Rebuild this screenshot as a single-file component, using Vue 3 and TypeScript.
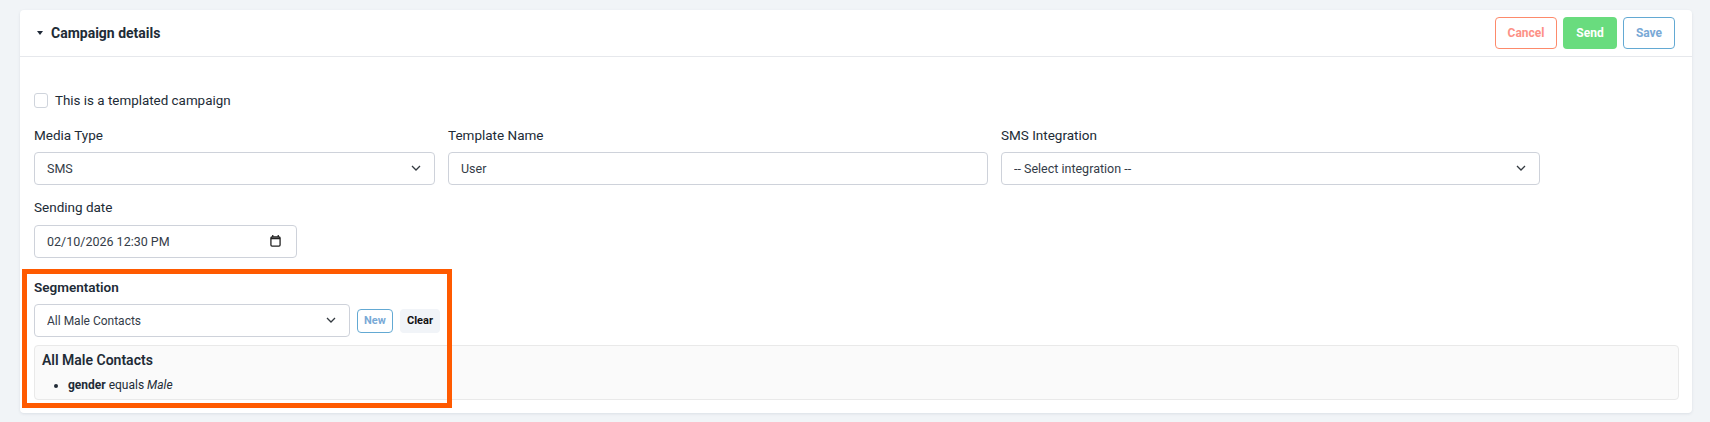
<template>
  <div class="page">
    <section class="card">
      <header class="card-head">
        <div class="title">
          <svg class="caret" width="6" height="4" viewBox="0 0 6 4"><path d="M0 0h6L3 4z" fill="#1f2937" /></svg>
          <h2>Campaign details</h2>
        </div>
        <div class="actions">
          <button class="btn cancel">Cancel</button>
          <button class="btn send">Send</button>
          <button class="btn save">Save</button>
        </div>
      </header>

      <div class="card-body">
        <label class="check">
          <input type="checkbox" />
          <span>This is a templated campaign</span>
        </label>

        <div class="fields">
          <div class="field">
            <label>Media Type</label>
            <div class="select-wrap">
              <select><option v-for="m in mediaTypes" :key="m">{{ m }}</option></select>
              <svg class="chev" width="10" height="6" viewBox="0 0 10 6"><path d="M1 1l4 4 4-4" fill="none" stroke="#343a40" stroke-width="1.3" /></svg>
            </div>
          </div>
          <div class="field">
            <label>Template Name</label>
            <input class="text" type="text" value="User" />
          </div>
          <div class="field">
            <label>SMS Integration</label>
            <div class="select-wrap">
              <select><option>-- Select integration --</option></select>
              <svg class="chev" width="10" height="6" viewBox="0 0 10 6"><path d="M1 1l4 4 4-4" fill="none" stroke="#343a40" stroke-width="1.3" /></svg>
            </div>
          </div>
        </div>

        <div class="field date">
          <label>Sending date</label>
          <div class="select-wrap">
            <input class="text" type="text" value="02/10/2026 12:30 PM" />
            <svg class="cal" width="11" height="12" viewBox="0 0 12 13">
              <path d="M3 0v2M9 0v2" stroke="#222" stroke-width="1.4" />
              <rect x="1" y="2" width="10" height="10" rx="1.2" fill="none" stroke="#222" stroke-width="1.4" />
              <path d="M1 3.6h10" stroke="#222" stroke-width="2" />
            </svg>
          </div>
        </div>

        <div class="field segment">
          <label>Segmentation</label>
          <div class="seg-row">
            <div class="select-wrap seg-select">
              <select><option>All Male Contacts</option></select>
              <svg class="chev" width="10" height="6" viewBox="0 0 10 6"><path d="M1 1l4 4 4-4" fill="none" stroke="#343a40" stroke-width="1.3" /></svg>
            </div>
            <button class="btn small new">New</button>
            <button class="btn small clear">Clear</button>
          </div>
        </div>

        <div class="summary">
          <h3>All Male Contacts</h3>
          <ul>
            <li v-for="r in rules" :key="r.field"><b>{{ r.field }}</b> {{ r.op }} <i>{{ r.value }}</i></li>
          </ul>
        </div>
      </div>

      <div class="highlight"></div>
    </section>
  </div>
</template>

<script setup lang="ts">
const mediaTypes: string[] = ['SMS']
const rules = [{ field: 'gender', op: 'equals', value: 'Male' }]
</script>

<style>
html, body { margin: 0; background: #f1f4f7; }
</style>

<style scoped>
.page {
  height: 422px;
  box-sizing: border-box;
  padding: 10px 18px 9px 20px;
  font-family: Roboto, "Liberation Sans", sans-serif;
  color: #212b36;
}
.card {
  position: relative;
  height: 403px;
  background: #fff;
  border-radius: 4px;
  box-shadow: 0 1px 3px rgba(30, 50, 80, .1);
}
.card-head {
  height: 46px;
  border-bottom: 1px solid #e6e8ec;
  display: flex;
  align-items: center;
  justify-content: space-between;
  padding: 0 17px 0 17px;
}
.title { display: flex; align-items: center; gap: 8px; }
.title h2 { margin: 0; font-size: 14px; font-weight: 700; }
.actions { display: flex; gap: 6px; }
.btn {
  font: 700 12px Roboto, "Liberation Sans", sans-serif;
  height: 32px;
  border-radius: 4px;
  border: 1px solid transparent;
  background: #fff;
  padding: 0;
}
.cancel { width: 62px; border-color: #fd8a6b; color: #fd9186; }
.send { width: 54px; background: #69dc7e; color: #fff; }
.save { width: 52px; border-color: #63a9d3; color: #79a9d6; }
.small { height: 24px; font-size: 11px; }
.new { width: 36px; border-color: #63a9d3; color: #79a9d6; }
.clear { width: 40px; background: #f1f4f8; color: #111; }

.card-body { padding: 35px 13px 0 14px; }
.check { display: flex; align-items: center; gap: 7px; height: 16px; font-size: 13.4px; font-weight: 400; }
.check input {
  appearance: none;
  margin: 0;
  width: 14px;
  height: 15px;
  border: 1px solid #cfd4dc;
  border-radius: 3px;
  background: #fff;
}
.fields { display: grid; grid-template-columns: 401px 540px 539px; column-gap: 13px; margin-top: 17px; }
.field { display: flex; flex-direction: column; }
.field label { font-size: 13.5px; font-weight: 400; line-height: 20px; margin-bottom: 7px; }
.select-wrap { position: relative; }
select, .text {
  display: block;
  width: 100%;
  height: 33px;
  box-sizing: border-box;
  border: 1px solid #ced2da;
  border-radius: 4px;
  background: #fff;
  padding: 0 12px;
  font: 400 12.5px Roboto, "Liberation Sans", sans-serif;
  color: #343c48;
  appearance: none;
  outline: none;
}
.chev { position: absolute; right: 14px; top: 13px; }
.cal { position: absolute; right: 16px; top: 10px; }
.date { width: 263px; margin-top: 12px; }
.date label { margin-bottom: 8px; }
.segment { margin-top: 19px; }
.segment label { font-weight: 600; margin-bottom: 7px; }
.seg-row { display: flex; align-items: center; gap: 7px; }
.seg-select { width: 316px; }
.seg-select select { font-size: 12px; }
.summary {
  margin-top: 8px;
  height: 55px;
  box-sizing: border-box;
  background: #fafafa;
  border: 1px solid #e9e9e9;
  border-radius: 4px;
  padding: 5px 7px;
}
.summary h3 { margin: 0; font-size: 14px; font-weight: 600; line-height: 18px; }
.summary ul { margin: 8px 0 0; padding: 0 0 0 26px; font-size: 12px; line-height: 16px; }
.summary b { font-weight: 700; }

.highlight {
  position: absolute;
  left: 2px;
  top: 259px;
  width: 430px;
  height: 139px;
  box-sizing: border-box;
  border: 5px solid #ff5a00;
  pointer-events: none;
}
</style>
